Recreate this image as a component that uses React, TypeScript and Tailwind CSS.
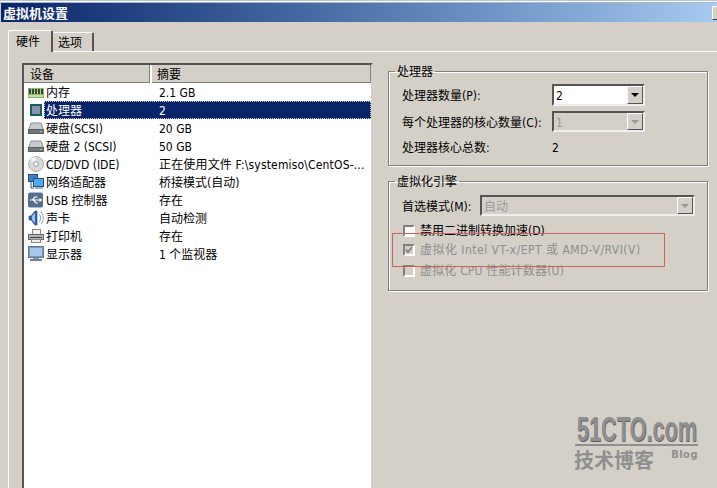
import React from "react";

const font = { fontFamily: '"DejaVu Sans Condensed","Noto Sans CJK SC",sans-serif' };
const cjk = { fontFamily: '"Noto Sans CJK SC",sans-serif' };

function Ram() {
  return (
    <svg width="16" height="16" viewBox="0 0 16 16">
      <rect x="0" y="4" width="16" height="10" fill="#8fb56a" />
      <rect x="1" y="5" width="14" height="5" fill="#2f4a26" />
      <path d="M3.5 5v5M6.5 5v5M9.5 5v5M12.5 5v5" stroke="#b7c9a4" strokeWidth="1" />
      <rect x="1" y="11" width="14" height="2" fill="#c8dba0" />
    </svg>
  );
}
function Cpu() {
  return (
    <svg width="16" height="16" viewBox="0 0 16 16">
      <rect x="2" y="2" width="12" height="12" fill="#1d5c5c" />
      <rect x="4" y="4" width="8" height="8" fill="#8a92b0" />
    </svg>
  );
}
function Disk() {
  return (
    <svg width="16" height="16" viewBox="0 0 16 16">
      <path d="M3 3h10l2.5 7H.5z" fill="#c8ccd0" stroke="#8d9196" />
      <rect x="0.5" y="9.5" width="15" height="4" fill="#73777b" stroke="#585b5f" />
      <rect x="12" y="11" width="2" height="1" fill="#7fe07f" />
    </svg>
  );
}
function Cd() {
  return (
    <svg width="16" height="16" viewBox="0 0 16 16">
      <circle cx="8" cy="8" r="7.5" fill="#d8d8d8" stroke="#b0b0b0" />
      <path d="M8 8L2 4a7 7 0 0 1 6-3z" fill="#f4f4f4" />
      <circle cx="8" cy="8" r="2.4" fill="#ffffff" stroke="#999" />
    </svg>
  );
}
function Net() {
  return (
    <svg width="16" height="16" viewBox="0 0 16 16">
      <rect x="0.5" y="0.5" width="9" height="7" fill="#3f7fc4" stroke="#23507f" />
      <path d="M3 8v6h3" stroke="#23507f" fill="none" />
      <rect x="5.5" y="4.5" width="10" height="8" fill="#4fa8ee" stroke="#23507f" />
      <rect x="7" y="13" width="8" height="2" fill="#9db4c8" />
    </svg>
  );
}
function Usb() {
  return (
    <svg width="16" height="16" viewBox="0 0 16 16">
      <rect x="0" y="0.5" width="15" height="15" rx="2" fill="#55708c" />
      <path d="M2 8h10M4.5 8l2.5-3h2.5M5.5 8l2.5 3h2" stroke="#fff" strokeWidth="1.2" fill="none" />
      <path d="M11.5 6l3 2-3 2z" fill="#fff" />
    </svg>
  );
}
function Sound() {
  return (
    <svg width="16" height="16" viewBox="0 0 16 16">
      <path d="M1 6h2l4-5h2v14H7L3 10H1z" fill="#2f62b5" stroke="#1e3f7a" strokeWidth="0.6" />
      <path d="M4 6l3-3v10l-3-3z" fill="#9fc0ee" />
      <path d="M11 4c2 2 2 6 0 8M13 2c3 3 3 9 0 12" stroke="#7ea2d8" fill="none" />
    </svg>
  );
}
function Printer() {
  return (
    <svg width="16" height="16" viewBox="0 0 16 16">
      <rect x="4.5" y="1.5" width="8" height="5" fill="#f2f2f2" stroke="#888" />
      <rect x="0.5" y="6.5" width="15" height="5" fill="#b4b4b4" stroke="#666" />
      <rect x="2" y="9" width="12" height="1" fill="#444" />
      <rect x="3.5" y="11.5" width="9" height="3" fill="#eee" stroke="#888" />
    </svg>
  );
}
function Monitor() {
  return (
    <svg width="16" height="16" viewBox="0 0 16 16">
      <rect x="0.5" y="0.5" width="15" height="11" fill="#6f9ac8" stroke="#6b7a8a" />
      <rect x="2" y="2" width="12" height="8" fill="#a8c8ea" />
      <path d="M5 12h6v1H5z" fill="#8a97a6" />
      <rect x="2" y="13" width="12" height="2" fill="#6f8296" />
    </svg>
  );
}

const rows = [
  { icon: <Ram />, name: "内存", sum: "2.1 GB" },
  { icon: <Cpu />, name: "处理器", sum: "2", selected: true },
  { icon: <Disk />, name: "硬盘(SCSI)", sum: "20 GB" },
  { icon: <Disk />, name: "硬盘 2 (SCSI)", sum: "50 GB" },
  { icon: <Cd />, name: "CD/DVD (IDE)", sum: "正在使用文件 F:\\systemiso\\CentOS-...", wide: true },
  { icon: <Net />, name: "网络适配器", sum: "桥接模式(自动)" },
  { icon: <Usb />, name: "USB 控制器", sum: "存在" },
  { icon: <Sound />, name: "声卡", sum: "自动检测" },
  { icon: <Printer />, name: "打印机", sum: "存在" },
  { icon: <Monitor />, name: "显示器", sum: "1 个监视器" },
];

function Combo({ value, disabled, className }: { value: string; disabled?: boolean; className: string }) {
  return (
    <div className={`flex items-center justify-between border-2 border-t-[#555] border-l-[#555] border-r-[#eeeeee] border-b-[#eeeeee] ${disabled ? "bg-[#d4d0c8] text-[#9a9a9a]" : "bg-white text-black"} ${className}`}>
      <span className="pl-[2px] pt-[2px]">{value}</span>
      <span className="w-[16px] h-full bg-[#d4d0c8] border border-t-white border-l-white border-r-[#555] border-b-[#555] flex items-center justify-center">
        <svg width="8" height="4" viewBox="0 0 8 4"><path d="M0 0h8L4 4z" fill={disabled ? "#9a9a9a" : "#000"} /></svg>
      </span>
    </div>
  );
}

function Check({ checked, disabled }: { checked?: boolean; disabled?: boolean }) {
  return (
    <span className={`ml-[1px] mr-[5px] w-[12px] h-[12px] shrink-0 flex items-center justify-center border-2 border-t-[#808080] border-l-[#808080] border-r-white border-b-white ${disabled ? "bg-[#d4d0c8]" : "bg-white"}`}>
      {checked && (
        <svg width="8" height="8" viewBox="0 0 8 8"><path d="M1 3.5l2 2.5L7 1" stroke="#808080" strokeWidth="1.8" fill="none" /></svg>
      )}
    </span>
  );
}

function Group({ title, className, children }: { title: string; className: string; children: React.ReactNode }) {
  return (
    <fieldset className={`border border-[#808080] shadow-[inset_1px_1px_0_#fff,1px_1px_0_#fff] pl-[13px] pr-[12px] ${className}`}>
      <legend className="ml-[-7px] px-[2px] text-[12px] leading-[14px]">
        <span className="block pt-[1px]">{title}</span>
      </legend>
      {children}
    </fieldset>
  );
}

export default function App() {
  return (
    <div style={font} className="w-[717px] h-[488px] overflow-hidden bg-[#d4d0c8] text-[12px] leading-[14px] text-black flex flex-col relative">
      <div className="h-[3px] shrink-0 border-t border-t-[#b8c4d8] border-b border-b-[#aab8cc] bg-white" />
      <div style={cjk} className="h-[19px] shrink-0 ml-[1px] flex items-center justify-between pl-[2px] bg-gradient-to-r from-[#0a246a] to-[#a6caf0] text-white font-bold text-[13px] leading-[19px]">
        <span>虚拟机设置</span>
        <span className="w-[5px] h-[14px] bg-[#d4d0c8] border-t border-l border-t-white border-l-white border-b border-b-[#404040]" />
      </div>
      <div className="flex flex-col flex-1 min-h-0 overflow-hidden pl-[8px] pt-[8px]">
        <div className="flex items-end h-[21px] shrink-0 relative z-10">
          <div className="w-[45px] h-[22px] mb-[-1px] bg-[#d4d0c8] border-l border-t border-white rounded-t-[2px] border-r-2 border-r-[#555] pl-[7px] pt-[4px]">硬件</div>
          <div className="w-[41px] h-[19px] bg-[#d4d0c8] border-t border-white rounded-t-[2px] border-r-2 border-r-[#555] pl-[5px] pt-[3px]">选项</div>
        </div>
        <div className="flex-1 min-h-0 border-t border-l border-white flex gap-[15px] pl-[13px] pt-[11px]">
          <div className="w-[351px] h-[500px] bg-white border-2 border-t-[#555] border-l-[#555] border-r-[#d4d0c8] border-b-[#d4d0c8] shrink-0">
            <div className="flex h-[18px] bg-[#d4d0c8] leading-[17px]">
              <div className="w-[128px] pl-[6px] pt-[2px] border-r-2 border-r-white shadow-[inset_-1px_-1px_0_#808080]">设备</div>
              <div className="flex-1 pl-[5px] pt-[2px] shadow-[inset_-1px_-1px_0_#808080]">摘要</div>
            </div>
            {rows.map((r) => (
              <div key={r.name} className="flex h-[18px] items-center">
                <div className="w-[20px] pl-[4px] shrink-0 flex items-center">{r.icon}</div>
                <div className={`flex flex-1 h-[18px] items-center ${r.selected ? "bg-[#0a246a] text-white outline-1 outline-dotted outline-offset-[-1px] outline-[#cccccc]" : ""}`}>
                  <div className="w-[115px] pl-[2px] pt-[2px] whitespace-nowrap">{r.name}</div>
                  <div className={`pt-[2px] whitespace-nowrap ${r.wide ? "tracking-[0.16px]" : ""}`}>{r.sum}</div>
                </div>
              </div>
            ))}
          </div>
          <div className="w-[320px] flex flex-col gap-[8px] pt-[1px] shrink-0">
            <Group title="处理器" className="h-[102px]">
              <div className="flex items-center mt-[5px]">
                <span className="w-[150px] pt-[2px]">处理器数量(P):</span>
                <Combo value="2" className="w-[93px] h-[22px]" />
              </div>
              <div className="flex items-center mt-[5px]">
                <span className="w-[150px] pt-[2px] whitespace-nowrap">每个处理器的核心数量(C):</span>
                <Combo value="1" disabled className="w-[93px] h-[21px]" />
              </div>
              <div className="flex items-center mt-[7px]">
                <span className="w-[150px] pt-[2px]">处理器核心总数:</span>
                <span className="pt-[2px]">2</span>
              </div>
            </Group>
            <Group title="虚拟化引擎" className="h-[117px]">
              <div className="flex items-center mt-[6px]">
                <span className="w-[78px] pt-[2px] whitespace-nowrap">首选模式(M):</span>
                <Combo value="自动" disabled className="w-[215px] h-[21px]" />
              </div>
              <div className="flex items-center mt-[8px]"><Check /><span>禁用二进制转换加速(D)</span></div>
              <div className="flex items-center mt-[5px] text-[#8e8e8e]"><Check checked disabled /><span className="tracking-[0.48px]">虚拟化 Intel VT-x/EPT 或 AMD-V/RVI(V)</span></div>
              <div className="flex items-center mt-[7px] text-[#8e8e8e]"><Check disabled /><span className="tracking-[0.18px]">虚拟化 CPU 性能计数器(U)</span></div>
            </Group>
          </div>
        </div>
      </div>
      <div className="absolute left-[392px] top-[233px] w-[273px] h-[34px] border border-[#d0605a]" />
      <div className="absolute left-[575px] top-[413px] w-[123px] text-[#8f8f8f]">
        <div className="flex justify-center h-[31px] items-center">
          <span className="text-[35px] leading-[31px] font-bold whitespace-nowrap scale-x-[0.62] [text-shadow:1px_1px_0_#5f5f5f]" style={{ fontFamily: '"Liberation Sans",sans-serif' }}>51CTO.com</span>
        </div>
        <div className="h-[2px] bg-[#8f8f8f]" />
        <div className="flex justify-between items-start mt-[3px]">
          <span style={cjk} className="text-[20px] leading-[22px] font-bold ml-[-1px]">技术博客</span>
          <span className="text-[11px] leading-[12px] font-bold tracking-[0.5px]">Blog</span>
        </div>
      </div>
    </div>
  );
}
